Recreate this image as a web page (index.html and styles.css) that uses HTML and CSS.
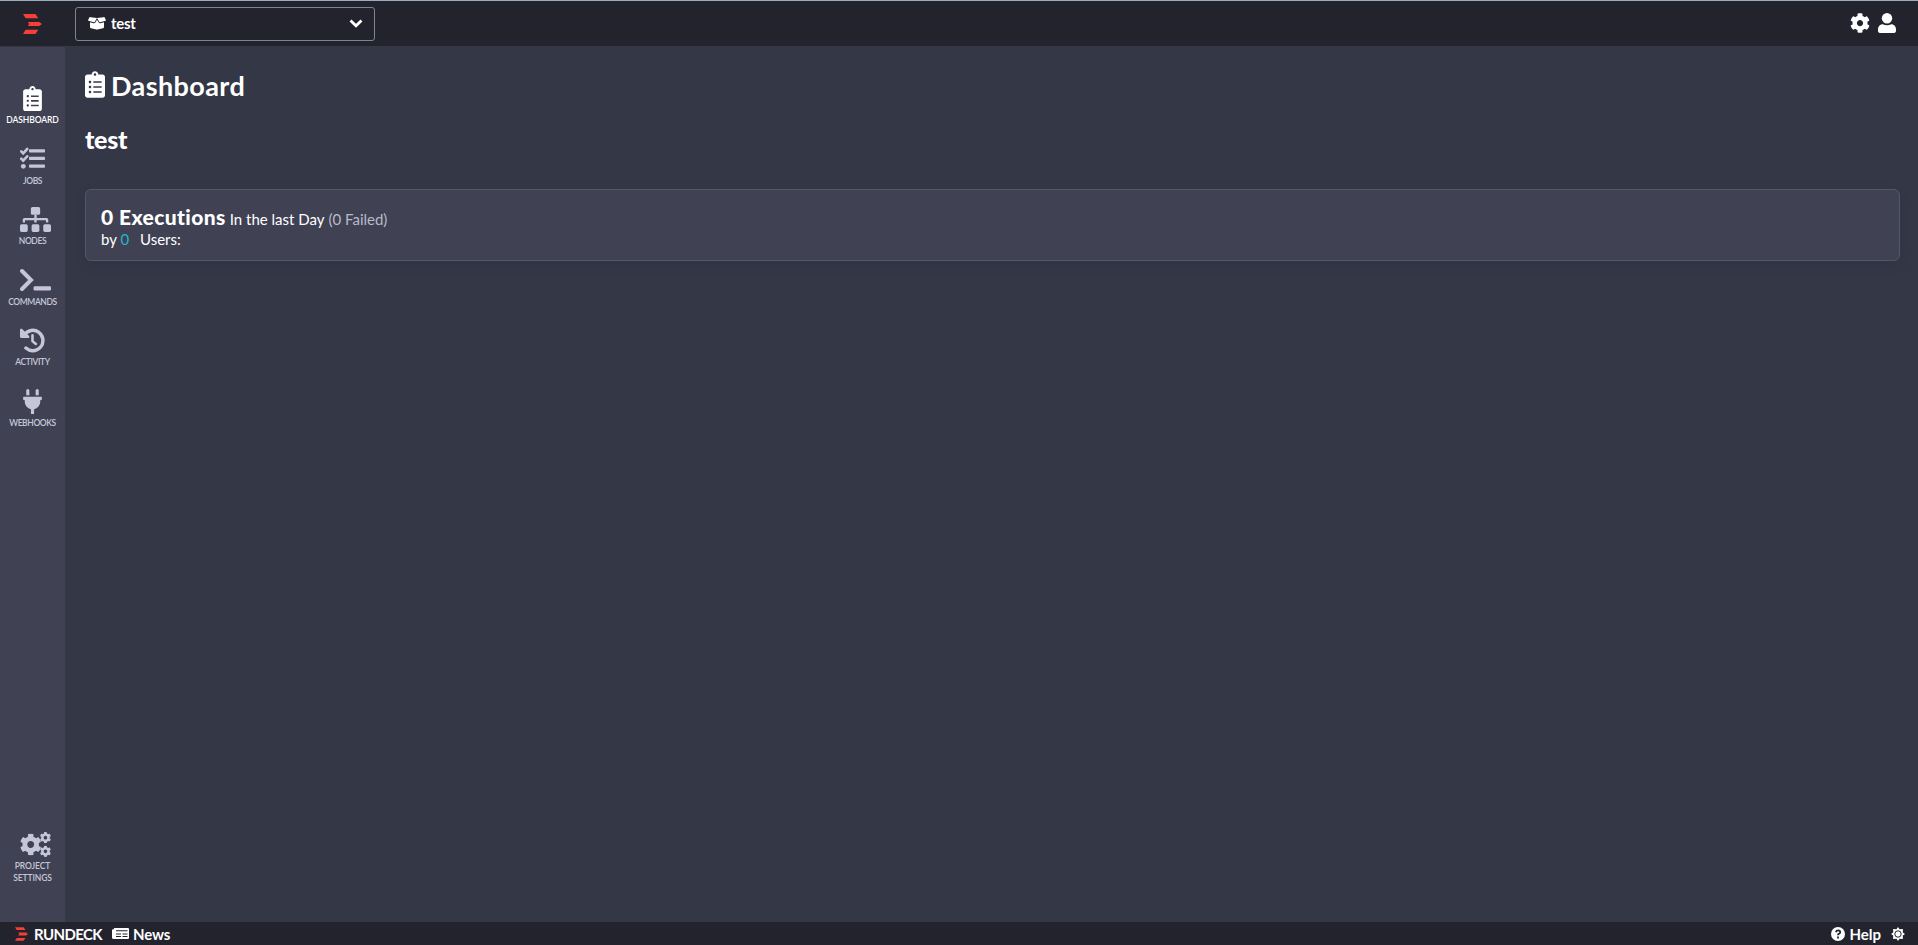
FILE: index.html
```html
<!DOCTYPE html>
<html lang="en">
<head>
    <meta charset="UTF-8">
    <title>Rundeck - test</title>
    <link rel="stylesheet" href="styles.css">
</head>

<body>
    <svg class="sprite" width="0" height="0">
        <symbol id="logo" viewBox="0 0 19 20">
            <path d="M0 0h12.5l2.8 4.2H2.6zM4.8 7.9h11.4l2.8 2.1-2.8 2.1H4.8l1.3-2.1zM2.6 15.8h12.7L12.5 20H0z"/>
        </symbol>
        <symbol id="clipboard" viewBox="0 0 384 512">
            <path d="M336 64h-80c0-35.300-28.700-64-64-64s-64 28.700-64 64H48C21.500 64 0 85.500 0 112v352c0 26.500 21.500 48 48 48h288c26.500 0 48-21.500 48-48V112c0-26.500-21.500-48-48-48zM96 424c-13.300 0-24-10.700-24-24s10.700-24 24-24 24 10.700 24 24-10.700 24-24 24zm0-96c-13.300 0-24-10.700-24-24s10.700-24 24-24 24 10.700 24 24-10.700 24-24 24zm0-96c-13.300 0-24-10.700-24-24s10.700-24 24-24 24 10.700 24 24-10.700 24-24 24zm96-192c13.300 0 24 10.700 24 24s-10.700 24-24 24-24-10.700-24-24 10.700-24 24-24zm128 368c0 4.400-3.600 8-8 8H168c-4.400 0-8-3.600-8-8v-16c0-4.400 3.600-8 8-8h144c4.400 0 8 3.600 8 8v16zm0-96c0 4.400-3.600 8-8 8H168c-4.400 0-8-3.600-8-8v-16c0-4.400 3.600-8 8-8h144c4.400 0 8 3.600 8 8v16zm0-96c0 4.400-3.600 8-8 8H168c-4.400 0-8-3.600-8-8v-16c0-4.400 3.600-8 8-8h144c4.400 0 8 3.600 8 8v16z"/>
        </symbol>
        <symbol id="cog" viewBox="0 0 512 512">
            <path d="M487.4 315.700l-42.600-24.600c4.300-23.200 4.300-47 0-70.200l42.600-24.600c4.900-2.800 7.100-8.600 5.500-14-11.100-35.600-30-67.800-54.700-94.600-3.800-4.100-10-5.100-14.800-2.300L380.800 110c-17.900-15.400-38.500-27.300-60.800-35.100V25.800c0-5.600-3.900-10.500-9.400-11.700-36.700-8.200-74.300-7.800-109.200 0-5.500 1.200-9.400 6.100-9.400 11.700V75c-22.200 7.900-42.800 19.800-60.800 35.100L88.700 85.500c-4.900-2.800-11-1.900-14.800 2.300-24.700 26.700-43.600 58.900-54.700 94.600-1.700 5.400.6 11.200 5.500 14L67.300 221c-4.300 23.200-4.300 47 0 70.200l-42.600 24.600c-4.900 2.800-7.100 8.600-5.500 14 11.100 35.600 30 67.800 54.700 94.600 3.800 4.100 10 5.100 14.800 2.300l42.600-24.600c17.900 15.400 38.500 27.300 60.800 35.100v49.200c0 5.600 3.900 10.500 9.400 11.700 36.700 8.200 74.300 7.800 109.200 0 5.500-1.200 9.400-6.100 9.400-11.700v-49.200c22.200-7.900 42.800-19.800 60.800-35.100l42.600 24.600c4.900 2.800 11 1.900 14.800-2.300 24.700-26.700 43.600-58.900 54.700-94.600 1.500-5.500-.7-11.300-5.600-14.100zM256 336c-44.100 0-80-35.900-80-80s35.900-80 80-80 80 35.900 80 80-35.900 80-80 80z"/>
        </symbol>
    </svg>

    <header class="topbar">
        <a class="brand"><svg class="logo" width="19" height="20"><use href="#logo"/></svg></a>
        <div class="project-select">
            <svg width="18" height="13" viewBox="0 0 18 13">
                <path fill="currentColor" d="M2.600.2L9 1.100 6.700 5c-.2.300-.5.400-.8.300L.5 3.800c-.4-.1-.6-.5-.4-.8L1.400.5C1.700 0 2.100.1 2.600.2zM15.400.2L9 1.100 11.300 5c.2.300.5.400.8.300l5.400-1.500c.4-.1.6-.5.4-.8L16.600.5c-.3-.5-.7-.4-1.200-.3zM9 2.700l1.500 2.600c.4.800 1.200 1.100 2 .9l3.500-1v4.900c0 .5-.3.900-.9 1.100L9.500 12.600c-.4.100-.7.100-1 0L2.900 11.200c-.6-.2-.9-.6-.9-1.100V5.200l3.500 1c.8.200 1.600-.1 2-.9z"/>
            </svg>
            <span>test</span>
            <svg class="caret" width="14" height="9" viewBox="0 0 14 9"><path d="M1.500 1.500L7 6.800l5.500-5.300"/></svg>
        </div>
        <div class="top-actions">
            <svg width="20" height="20"><use href="#cog"/></svg>
            <svg width="18" height="20" viewBox="0 0 18 20"><circle cx="9" cy="5.200" r="5.200"/><path d="M4.700 11.300c2.700 1.300 5.900 1.300 8.600 0 2.600 0 4.700 2.200 4.700 5V18c0 1.100-.8 1.900-1.800 1.900H1.800C.8 19.900 0 19.100 0 18v-1.700c0-2.800 2.100-5 4.700-5z"/></svg>
        </div>
    </header>

    <div class="layout">
        <nav class="sidebar">
            <a class="nav-item active">
                <span class="nav-icon"><svg width="19" height="25"><use href="#clipboard"/></svg></span>
                DASHBOARD
            </a>
            <a class="nav-item">
                <span class="nav-icon"><svg width="25" height="25" viewBox="0 0 25 25">
                    <path class="line thin" d="M1.200 4.300l2 2 4-4.300M1.200 11.600l2 2 4-4.300"/><circle cx="3.300" cy="19.300" r="2.400"/>
                    <rect x="9" y="2.300" width="16" height="3.200" rx=".8"/><rect x="9" y="9.800" width="16" height="3.200" rx=".8"/><rect x="9" y="17.600" width="16" height="3.200" rx=".8"/>
                </svg></span>
                JOBS
            </a>
            <a class="nav-item">
                <span class="nav-icon wide"><svg width="31" height="25" viewBox="0 0 640 512">
                    <rect y="352" width="160" height="160" rx="32"/><rect x="240" y="352" width="160" height="160" rx="32"/><rect x="480" y="352" width="160" height="160" rx="32"/>
                    <rect x="224" width="192" height="160" rx="32"/>
                    <path d="M104 272h192v48h48v-48h192v48h48v-57.600c0-21.200-17.200-38.400-38.400-38.400H344v-64h-48v64H94.400C73.200 224 56 241.200 56 262.400V320h48z"/>
                </svg></span>
                NODES
            </a>
            <a class="nav-item">
                <span class="nav-icon wide"><svg width="31" height="25" viewBox="0 0 31 25">
                    <path class="line" d="M2 3l9 9-9 9"/><rect x="13.600" y="18.300" width="17.400" height="4.200" rx="1.200"/>
                </svg></span>
                COMMANDS
            </a>
            <a class="nav-item">
                <span class="nav-icon"><svg width="25" height="25" viewBox="0 0 25 25">
                    <path class="ring" d="M4.300 6.800a10.200 10.200 0 1 1 1.600 13.300"/>
                    <path d="M0 1.900C0 .8 1.300.3 2.100 1l7 7c.8.800.2 2-.8 2H1.200C.5 10 0 9.500 0 8.800z"/>
                    <path class="line thin" d="M12.500 7.200v6l3.400 2.700"/>
                </svg></span>
                ACTIVITY
            </a>
            <a class="nav-item">
                <span class="nav-icon"><svg width="19" height="25" viewBox="0 0 384 512">
                    <path d="M320 32a32 32 0 0 0-64 0v96h64zm48 128H16A16 16 0 0 0 0 176v32a16 16 0 0 0 16 16h16v32a160 160 0 0 0 128 156.800V512h64v-99.200A160 160 0 0 0 352 256v-32h16a16 16 0 0 0 16-16v-32a16 16 0 0 0-16-16zM128 32a32 32 0 0 0-64 0v96h64z"/>
                </svg></span>
                WEBHOOKS
            </a>
            <a class="nav-item settings">
                <span class="nav-icon wide"><svg width="31" height="25" viewBox="0 0 31 25">
                    <use href="#cog" x="-.3" y="1.500" width="22" height="22"/>
                    <use href="#cog" x="19.700" y="-.1" width="11.500" height="11.500"/>
                    <use href="#cog" x="19.700" y="13.600" width="11.500" height="11.500"/>
                </svg></span>
                PROJECT<br>SETTINGS
            </a>
        </nav>

        <main class="content">
            <h1 class="page-title"><svg width="20" height="27"><use href="#clipboard"/></svg>Dashboard</h1>
            <h2 class="project-name">test</h2>
            <section class="card">
                <div class="executions"><strong>0 Executions</strong><span>In the last Day</span><span class="muted">(0 Failed)</span></div>
                <div class="users">by <span class="count">0</span> Users:</div>
            </section>
        </main>
    </div>

    <footer class="bottombar">
        <a class="foot-brand"><svg class="logo" width="13" height="14"><use href="#logo"/></svg>RUNDECK</a>
        <a class="foot-news"><svg width="17" height="11" viewBox="0 0 17 11">
            <path fill-rule="evenodd" d="M2.800 0H16a1 1 0 0 1 1 1v9a1 1 0 0 1-1 1H1.500A1.500 1.500 0 0 1 0 9.500V2.200a1 1 0 0 1 1-1h.8V1a1 1 0 0 1 1-1zM4 2.200v1h11.500v-1zM4 5.500v1h5v-1zM10.500 5.500v1h5v-1zM4 8v1h5V8zM10.500 8v1h5V8z"/>
        </svg>News</a>
        <a class="foot-help"><svg width="14" height="14" viewBox="0 0 14 14"><circle cx="7" cy="7" r="7"/><path class="question" d="M4.900 5.200C5.200 3.900 6 3.400 7.100 3.400c2.700 0 2.800 2.700.7 3.500-.6.300-.8.600-.8 1.300M7 9.500v1.900"/></svg>Help</a>
        <svg class="sun" width="14" height="14" viewBox="0 0 14 14">
            <path d="M7 0l1.500 2.200 3.400-.1-.1 3.400L14 7l-2.200 1.500.1 3.400-3.400-.1L7 14l-1.500-2.200-3.400.1.100-3.400L0 7l2.200-1.500-.1-3.400 3.400.1z"/>
            <circle class="sun-ring" cx="7" cy="7" r="3.200"/>
        </svg>
    </footer>
</body>
</html>
```
FILE: styles.css
```css
* {
    box-sizing: border-box;
}

body {
    margin: 0;
    height: 100vh;
    display: flex;
    flex-direction: column;
    background: #343746;
    color: #fff;
    font-family: Lato, sans-serif;
    font-size: 15px;
    overflow: hidden;
}

svg {
    display: block;
    flex: none;
    fill: currentColor;
}

.sprite {
    display: none;
}

.logo {
    color: #f73f39;
}

.topbar {
    height: 46px;
    flex: none;
    display: flex;
    align-items: center;
    padding-right: 22px;
    background: #23232e;
    border-top: 1px solid #9caabf;
}

.brand {
    width: 75px;
    padding-left: 23px;
}

.project-select {
    width: 300px;
    height: 34px;
    display: flex;
    align-items: center;
    gap: 5px;
    padding: 0 11px 0 12px;
    border: 1px solid #808393;
    border-radius: 3px;
    font-weight: 700;
    line-height: 18px;
}

.project-select span {
    padding-bottom: 1px;
    letter-spacing: -0.3px;
}

.caret {
    margin-left: auto;
    fill: none;
    stroke: #fff;
    stroke-width: 2.8;
}

.top-actions {
    margin-left: auto;
    padding-bottom: 1px;
    display: flex;
    gap: 8px;
}

.layout {
    flex: 1;
    min-height: 0;
    display: flex;
}

.sidebar {
    width: 65px;
    flex: none;
    display: flex;
    flex-direction: column;
    padding: 39px 0 37px;
    background: #404254;
    border-top: 1px solid #343746;
}

.nav-item {
    height: 60.5px;
    flex: none;
    color: #c5c7d8;
    font-size: 8.5px;
    font-weight: 600;
    letter-spacing: -0.4px;
    line-height: 12px;
    text-align: center;
}

.nav-item.active {
    color: #fff;
    letter-spacing: -0.1px;
}

.nav-icon {
    width: 25px;
    height: 25px;
    display: flex;
    justify-content: center;
    margin: 0 auto 3px;
}

.nav-icon.wide {
    justify-content: flex-start;
}

.settings {
    height: 53px;
    margin-top: auto;
    letter-spacing: -0.1px;
}

.line {
    fill: none;
    stroke: currentColor;
    stroke-width: 4;
    stroke-linecap: round;
}

.line.thin {
    stroke-width: 2.6;
}

.ring {
    fill: none;
    stroke: currentColor;
    stroke-width: 3.4;
    stroke-linecap: round;
}

.content {
    flex: 1;
    padding: 22px 18px 0 20px;
}

.page-title {
    display: flex;
    align-items: center;
    gap: 6px;
    height: 34px;
    margin: 0;
    font-size: 27px;
    font-weight: 700;
    letter-spacing: 0.4px;
}

.page-title svg {
    margin-bottom: 1px;
}

.project-name {
    margin: 22px 0 0;
    font-size: 25px;
    font-weight: 900;
    letter-spacing: -0.3px;
    line-height: 30px;
}

.card {
    height: 72px;
    margin-top: 35px;
    padding: 15px 15px;
    background: #404254;
    border: 1px solid #555769;
    border-radius: 6px;
    box-shadow: 0 4px 14px rgba(0, 0, 0, 0.08);
}

.executions {
    display: flex;
    align-items: baseline;
    gap: 4px;
    height: 25px;
    line-height: 24px;
}

.executions strong {
    font-size: 21px;
    font-weight: 900;
    letter-spacing: 0.4px;
}

.muted {
    color: #b8bac9;
}

.users {
    line-height: 19px;
}

.count {
    margin-right: 7px;
    color: #1fb5cf;
}

.bottombar {
    height: 23px;
    flex: none;
    display: flex;
    align-items: center;
    padding: 0 13px 0 15px;
    background: #23232e;
    font-weight: 700;
}

.bottombar a {
    display: flex;
    align-items: center;
}

.foot-brand {
    gap: 6px;
    letter-spacing: -0.6px;
}

.foot-news {
    margin-left: 10px;
    gap: 4px;
    letter-spacing: -0.2px;
}

.foot-help {
    margin-left: auto;
    gap: 4px;
}

.question {
    fill: none;
    stroke: #23232e;
    stroke-width: 1.8;
}

.sun {
    margin-left: 10px;
}

.sun-ring {
    fill: #fff;
    stroke: #23232e;
    stroke-width: 1;
}
```
